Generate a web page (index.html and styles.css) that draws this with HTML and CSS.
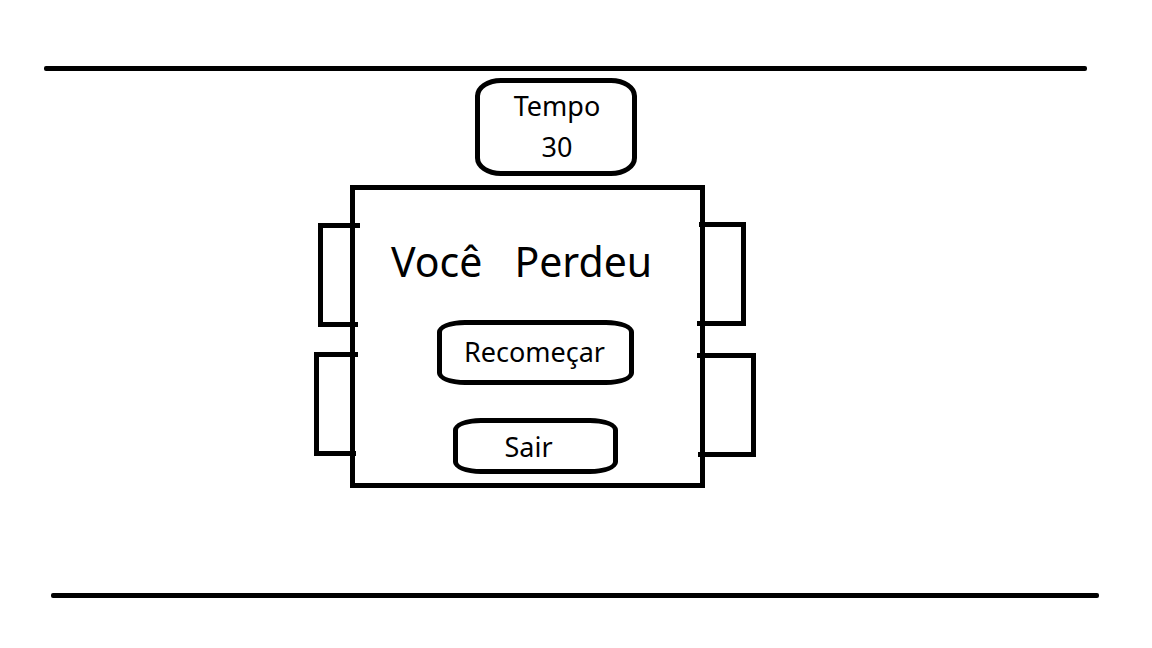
FILE: index.html
```html
<!DOCTYPE html>
<html lang="pt-BR">
<head>
<meta charset="utf-8">
<meta name="viewport" content="width=device-width, initial-scale=1">
<title>Você Perdeu</title>
<link rel="stylesheet" href="styles.css">
</head>
<body>
<main class="screen">
  <hr class="wall wall-top">
  <section class="timer-row">
    <div class="timer">
      <span>Tempo</span>
      <span>30</span>
    </div>
  </section>
  <section class="table-row">
    <div class="chairs chairs-left">
      <svg class="chair chair-near" width="42" height="104" viewBox="0 0 42 104" aria-hidden="true"><path d="M42 2.500H2.500V101.500H40"/></svg>
      <svg class="chair" width="44" height="104" viewBox="0 0 44 104" aria-hidden="true"><path d="M44 2.500H2.500V101.500H42"/></svg>
    </div>
    <div class="panel">
      <h1 class="title"><span>Você</span> <span>Perdeu</span></h1>
      <button class="action restart" type="button">Recomeçar</button>
      <button class="action quit" type="button">Sair</button>
    </div>
    <div class="chairs chairs-right">
      <svg class="chair" width="49" height="104" viewBox="0 0 49 104" aria-hidden="true"><path d="M2 2.500H46.500V101.500H0"/></svg>
      <svg class="chair" width="59" height="104" viewBox="0 0 59 104" aria-hidden="true"><path d="M0 2.500H56.500V101.500H1"/></svg>
    </div>
  </section>
  <hr class="wall wall-bottom">
</main>
</body>
</html>
```
FILE: styles.css
```css
* {
  box-sizing: border-box;
}

body {
  margin: 0;
  background: #fff;
  color: #000;
  font-family: "Noto Sans", "Open Sans", sans-serif;
  font-size: 27px;
}

.screen {
  display: flex;
  flex-direction: column;
  padding: 66px 0 50px;
}

.wall {
  height: 5px;
  border: 0;
  border-radius: 2px;
  background: #000;
}

.wall-top {
  margin: 0 65px 7px 44px;
}

.wall-bottom {
  margin: 105px 53px 0 51px;
}

.timer-row {
  display: flex;
  justify-content: center;
  padding-right: 40px;
  margin-bottom: 9px;
}

.timer {
  display: flex;
  flex-direction: column;
  align-items: center;
  min-width: 162px;
  padding: 2px 0 4px 2px;
  border: 5px solid #000;
  border-radius: 26px / 18px;
  line-height: 41px;
}

.table-row {
  display: flex;
  justify-content: center;
  padding-right: 82px;
}

.chairs {
  display: flex;
  flex-direction: column;
  gap: 25px;
}

/* The chair rails run over the edges of the table. */
.chairs-left {
  width: 36px;
  padding-top: 38px;
}

.chairs-right {
  width: 59px;
  margin-left: -8px;
  padding-top: 37px;
  gap: 27px;
}

.chair {
  display: block;
  flex: none;
  fill: none;
  stroke: #000;
  stroke-width: 5px;
}

.chair-near {
  margin-left: 4px;
}

.panel {
  display: flex;
  flex-direction: column;
  align-items: center;
  width: 355px;
  padding: 43px 0 9px 16px;
  border: 5px solid #000;
}

.title {
  display: flex;
  align-self: flex-start;
  gap: 32px;
  margin: 0 0 31px 20px;
  font-size: 41px;
  font-weight: 400;
  line-height: 56px;
}

.action {
  border: 5px solid #000;
  border-radius: 28px / 12px;
  background: #fff;
  color: inherit;
  font: inherit;
  line-height: 40px;
  cursor: pointer;
}

.restart {
  min-width: 197px;
  margin-bottom: 33px;
  padding: 7px 10px 8px 8px;
}

.quit {
  min-width: 165px;
  padding: 4px 22px 2px 8px;
}
```
